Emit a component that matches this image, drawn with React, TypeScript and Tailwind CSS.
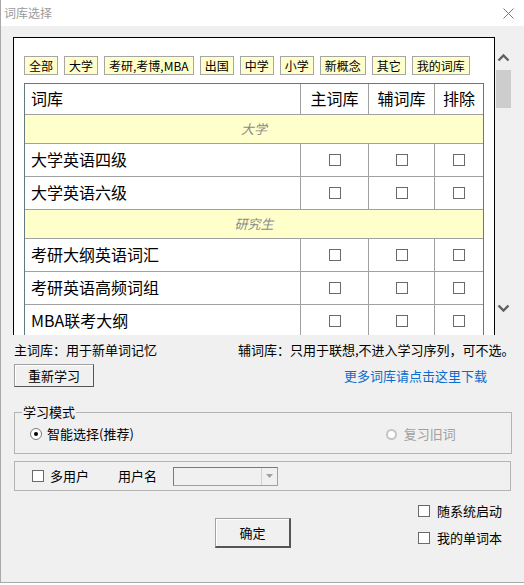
import React from 'react';

const tags = ['全部', '大学', '考研,考博,MBA', '出国', '中学', '小学', '新概念', '其它', '我的词库'];

type Row = { kind: 'cat' | 'item'; label: string };

const rows: Row[] = [
  { kind: 'cat', label: '大学' },
  { kind: 'item', label: '大学英语四级' },
  { kind: 'item', label: '大学英语六级' },
  { kind: 'cat', label: '研究生' },
  { kind: 'item', label: '考研大纲英语词汇' },
  { kind: 'item', label: '考研英语高频词组' },
  { kind: 'item', label: 'MBA联考大纲' },
];

const Box = () => <span className="block w-[12px] h-[12px] border border-[#6a6a6a] bg-white" />;

const Chevron = ({ up }: { up?: boolean }) => (
  <svg width="13" height="9" viewBox="0 0 13 9">
    <path
      d={up ? 'M1.5 7.5 L6.5 2.5 L11.5 7.5' : 'M1.5 1.5 L6.5 6.5 L11.5 1.5'}
      fill="none"
      stroke="#606060"
      strokeWidth="2.4"
    />
  </svg>
);

const WordTable = () => (
  <div className="w-[460px] border-l border-r border-t border-[#5f7b7b] text-black">
    <div className="flex h-[31px] border-b border-[#a0a0a0] text-[16px] leading-[20px]">
      <div className="w-[276px] border-r border-[#a0a0a0] pl-[6px] pb-[2px] flex items-center">词库</div>
      <div className="w-[68px] border-r border-[#a0a0a0] pb-[2px] flex items-center justify-center">主词库</div>
      <div className="w-[66px] border-r border-[#a0a0a0] pb-[2px] flex items-center justify-center">辅词库</div>
      <div className="flex-1 pb-[2px] flex items-center justify-center">排除</div>
    </div>
    {rows.map((r, i) =>
      r.kind === 'cat' ? (
        <div
          key={i}
          className="h-[29px] bg-[#ffffcc] border-b border-[#a0a0a0] flex items-center justify-center text-[13px] italic text-[#8a8a8a]"
        >
          {r.label}
        </div>
      ) : (
        <div key={i} className="flex h-[33px] border-b border-[#a0a0a0] text-[16px] leading-[20px]">
          <div className="w-[276px] border-r border-[#a0a0a0] pl-[6px] pb-[3px] flex items-center">{r.label}</div>
          <div className="w-[68px] border-r border-[#a0a0a0] flex items-center justify-center">
            <Box />
          </div>
          <div className="w-[66px] border-r border-[#a0a0a0] flex items-center justify-center">
            <Box />
          </div>
          <div className="flex-1 flex items-center justify-center">
            <Box />
          </div>
        </div>
      )
    )}
  </div>
);

export default function App() {
  return (
    <div className="w-[524px] h-[585px] bg-white font-['Noto_Sans_CJK_SC','Liberation_Sans',sans-serif]">
      <div className="w-[524px] h-[583px] border-l border-b border-[#a9a9a9] bg-[#f0f0f0] flex flex-col">
        {/* title bar */}
        <div className="h-[26px] bg-white flex items-center justify-between pl-[3px] pr-[10px]">
          <span className="text-[12px] text-[#9a9a9a] leading-[14px]">词库选择</span>
          <svg width="11" height="11" viewBox="0 0 11 11">
            <path d="M0.5 0.5 L10.5 10.5 M10.5 0.5 L0.5 10.5" stroke="#777" strokeWidth="1" />
          </svg>
        </div>

        {/* list panel + scrollbar */}
        <div className="flex ml-[12px] mt-[11px]">
          <div className="w-[482px] h-[298px] border-l border-r border-t border-black bg-white overflow-hidden pl-[10px] pt-[18px]">
            <div className="flex gap-[6px] mb-[8px]">
              {tags.map((t) => (
                <span
                  key={t}
                  className="h-[19px] px-[4px] border border-[#a6a6a6] bg-[#ffffcc] text-[12px] leading-[17px] text-black whitespace-nowrap"
                >
                  {t}
                </span>
              ))}
            </div>
            <WordTable />
          </div>
          <div className="w-[17px] h-[298px] flex flex-col items-center">
            <div className="mt-[16px]">
              <Chevron up />
            </div>
            <div className="mt-[8px] w-[15px] h-[38px] bg-[#cdcdcd]" />
            <div className="mt-[196px]">
              <Chevron />
            </div>
          </div>
        </div>

        {/* info lines */}
        <div className="flex mt-[7px] h-[16px] text-[13px] leading-[16px] text-black">
          <span className="ml-[13px] w-[224px]">主词库：用于新单词记忆</span>
          <span>辅词库：只用于联想,不进入学习序列，可不选。</span>
        </div>

        <div className="flex items-center mt-[6px]">
          <button className="ml-[13px] w-[80px] h-[23px] bg-[#f0f0f0] border border-[#a0a0a0] border-r-[#555] border-b-[#555] shadow-[inset_1px_1px_0_#fff] text-[13px] leading-[16px] text-black">
            重新学习
          </button>
          <span className="ml-[250px] text-[13px] leading-[16px] text-[#0a6ccc]">更多词库请点击这里下载</span>
        </div>

        {/* study mode group */}
        <div className="relative ml-[13px] mt-[25px] w-[498px] h-[42px] border border-[#b4b4b4] flex items-center">
          <span className="absolute -top-[9px] left-[7px] px-[1px] bg-[#f0f0f0] text-[13px] leading-[16px] text-black">
            学习模式
          </span>
          <div className="flex items-center ml-[15px] mt-[2px]">
            <span className="w-[12px] h-[12px] rounded-full border border-[#7a7a7a] bg-white flex items-center justify-center">
              <span className="w-[4px] h-[4px] rounded-full bg-black" />
            </span>
            <span className="ml-[5px] text-[13px] leading-[16px] text-black">智能选择(推荐)</span>
          </div>
          <div className="flex items-center ml-[252px] mt-[2px]">
            <span className="w-[11px] h-[11px] rounded-full border-2 border-[#c4c4c4] bg-white" />
            <span className="ml-[7px] text-[13px] leading-[16px] text-[#a0a0a0]">复习旧词</span>
          </div>
        </div>

        {/* user group */}
        <div className="ml-[13px] mt-[7px] w-[497px] h-[30px] border border-[#b4b4b4] flex items-center">
          <span className="ml-[17px] w-[12px] h-[12px] border border-[#6a6a6a] bg-white" />
          <span className="ml-[6px] text-[13px] leading-[16px] text-black">多用户</span>
          <span className="ml-[29px] text-[13px] leading-[16px] text-black">用户名</span>
          <div className="ml-[16px] w-[105px] h-[19px] border border-[#a0a0a0] border-l-[#7a7a7a] border-t-[#7a7a7a] bg-[#f0f0f0] flex justify-end">
            <div className="w-[16px] h-[17px] border-l border-[#d0d0d0] flex items-center justify-center">
              <svg width="7" height="4" viewBox="0 0 7 4">
                <path d="M0 0 L7 0 L3.5 4 Z" fill="#a0a0a0" />
              </svg>
            </div>
          </div>
        </div>

        {/* bottom */}
        <div className="flex items-start">
          <button className="ml-[214px] mt-[27px] w-[76px] h-[30px] bg-[#f0f0f0] border border-[#a0a0a0] border-r-2 border-b-2 border-r-[#555] border-b-[#555] shadow-[inset_1px_1px_0_#fff] text-[13px] leading-[16px] text-black">
            确定
          </button>
          <div className="ml-[127px] mt-[14px] flex flex-col gap-[15px]">
            <div className="flex items-center">
              <span className="w-[12px] h-[12px] border border-[#6a6a6a] bg-white" />
              <span className="ml-[7px] text-[13px] leading-[12px] text-black">随系统启动</span>
            </div>
            <div className="flex items-center">
              <span className="w-[12px] h-[12px] border border-[#6a6a6a] bg-white" />
              <span className="ml-[7px] text-[13px] leading-[12px] text-black">我的单词本</span>
            </div>
          </div>
        </div>
      </div>
    </div>
  );
}
